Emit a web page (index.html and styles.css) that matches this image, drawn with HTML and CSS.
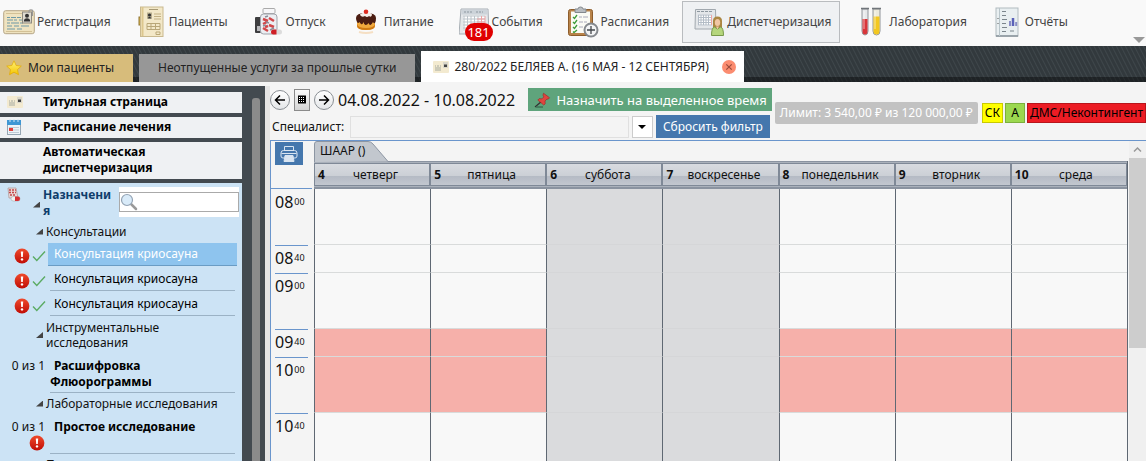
FILE: index.html
```html
<!DOCTYPE html>
<html lang="ru">

<head>
    <meta charset="UTF-8">
    <title>Диспетчеризация</title>
    <link rel="stylesheet" href="styles.css">
</head>

<body>

    <!-- Shared icons -->
    <svg class="sprite" aria-hidden="true">
        <defs>
            <linearGradient id="g-red" x1="0" y1="0" x2="0" y2="1">
                <stop offset="0" stop-color="#ef4a2c"/><stop offset="1" stop-color="#c00d05"/>
            </linearGradient>
            <linearGradient id="g-star" x1="0" y1="0" x2="0" y2="1">
                <stop offset="0" stop-color="#fff27a"/><stop offset="1" stop-color="#f4c400"/>
            </linearGradient>
        </defs>
        <symbol id="i-alert" viewBox="0 0 16 16">
            <circle cx="8" cy="8" r="7.4" fill="url(#g-red)"/>
            <path d="M6.8 3.4h2.4L8.8 9H7.2z" fill="#fff"/><circle cx="8" cy="11.4" r="1.2" fill="#fff"/>
        </symbol>
        <symbol id="i-check" viewBox="0 0 14 12">
            <path d="M1 6.5L4.8 10.5L13 1.5" fill="none" stroke="#5bab62" stroke-width="1.4"/>
        </symbol>
        <symbol id="i-card" viewBox="0 0 32 26">
            <rect x=".7" y="1.7" width="30.6" height="23" rx="2" fill="#efe3c0" stroke="#b5a687"/>
            <path d="M3 4.5h16M3 22.5h26" stroke="#d3c196"/>
            <path d="M4 8.5h3m1 0h5m1 0h4M4 11h6m1 0h3m2 0h3M4 14h3m1 0h8m1 0h3M4 17h5m2 0h5m2 0h8M4 20h8m2 0h5" stroke="#6f9aa6" stroke-width="1.2"/>
            <rect x="19.5" y="3" width="9" height="11" fill="#dedbd0" stroke="#8d8a80"/>
            <circle cx="24" cy="6.8" r="2" fill="#333"/><path d="M20.8 12.5q.2-3.2 3.2-3.2t3.2 3.2z" fill="#333"/>
            <path d="M26 4V2q0-1.3 1.8-1.3T29.500 2v5" fill="none" stroke="#999" stroke-width="1.1"/>
        </symbol>
        <symbol id="i-card-small" viewBox="0 0 16 12">
            <rect width="16" height="12" rx="1" fill="#f3ead0"/>
            <path d="M2 5h1m1 0h2m1 0h1M2 7h6M2 9h6" stroke="#a5aaa0"/>
            <rect x="10" y="1" width="5" height="6" fill="#d9d6ca"/><path d="M11 6V3.500h3V6z" fill="#444"/>
        </symbol>
    </svg>

    <!-- Main toolbar -->
    <nav class="toolbar">
        <button class="tool">
            <span class="tool-icon"><svg width="32" height="26"><use href="#i-card"/></svg></span>Регистрация
        </button>
        <button class="tool">
            <span class="tool-icon">
                <svg width="26" height="32" viewBox="0 0 26 32">
                    <rect x="1" y="11" width="4" height="8" fill="#d8b34a" stroke="#8f7430"/>
                    <rect x="2.500" y="1" width="22.500" height="29.500" fill="#f3e8c8" stroke="#c9b98f"/>
                    <path d="M4.500 1v29" stroke="#dcc78e" stroke-width="2"/>
                    <path d="M11 3.500h9" stroke="#a89a75"/>
                    <rect x="9" y="6.500" width="5" height="6" fill="#b8ad8e"/><circle cx="11.500" cy="9" r="1.600" fill="#333"/><path d="M9.500 12.500q2-3.500 4 0z" fill="#333"/>
                    <path d="M16 8h7M16 10.500h7M16 13h7" stroke="#c2b083"/>
                    <path d="M9 17.500h13v6H9zM9 20.500h13M13 17.500v6M17.500 17.500v6M18 26h4v2.500h-4z" fill="none" stroke="#b9a778"/>
                </svg>
            </span>Пациенты
        </button>
        <button class="tool">
            <span class="tool-icon">
                <svg width="28" height="30" viewBox="0 0 28 30">
                    <rect x="1" y="10" width="6" height="16" rx="1" fill="#3e3e40"/><path d="M3 19h4v5H3z" fill="#b9b9bc"/>
                    <rect x="9" y="1.500" width="12" height="5" rx="1" fill="#f6f6f8" stroke="#aaa"/>
                    <rect x="6.500" y="7" width="16.500" height="20" rx="3" fill="#eceef2" stroke="#9fa3ab"/>
                    <path d="M9 12l5 2M15 11l5 3M9 17l4-2M15 18l5 2M9 21l5 3M11 20l3-1" stroke="#d2474a" stroke-width="2.500"/>
                    <path d="M11 10l3-1M12 15l3 1M9 19l3-1M16 23l4-2" stroke="#8b8d98" stroke-width="1.500"/>
                    <rect x="17" y="22.500" width="11" height="5" rx="2.500" fill="#dcdcdc"/><path d="M17 25q0-2.500 2.500-2.500h3v5h-3q-2.500 0-2.500-2.500z" fill="#cf1f26"/>
                </svg>
            </span>Отпуск
        </button>
        <button class="tool">
            <span class="tool-icon">
                <svg width="22" height="26" viewBox="0 0 22 26">
                    <path d="M2 10v6q0 5 9 5t9-5v-6z" fill="#f0a93d"/><path d="M2 15q1 4 9 4t9-4v2q0 4-9 4t-9-4z" fill="#d07a12"/>
                    <path d="M1 9q0-5 10-5t10 5q0 4-1 5-1 1-2-1-1 2-2.500 3-1.500 0-2-2-1 2-3 2-1.500 0-2-3-1 3-2.500 2-1-1-1.500-2-1.500 2-2.500 0T1 9z" fill="#4b1d12"/>
                    <path d="M5 6q0-2 6-2.500t6 2.500q-1 3-3 1-2 2-4 0-3 2-5-1z" fill="#f5eee9"/>
                    <circle cx="11" cy="2.800" r="2.300" fill="#dd2b20"/>
                    <path d="M4 23q7 2 14 0" stroke="#f5dfc4" stroke-width="2" fill="none"/>
                </svg>
            </span>Питание
        </button>
        <button class="tool">
            <span class="tool-icon">
                <svg width="30" height="28" viewBox="0 0 30 28">
                    <path d="M2 1h27l1 25H0z" fill="#e4e7ea" stroke="#a7aeb4"/><path d="M2.500 1.500h26v5h-26z" fill="#ccd3d9"/>
                    <path d="M5 4h9m3 0h7" stroke="#8d979f" stroke-dasharray="2 1"/>
                    <path d="M4 7.500h22v16H4z" fill="#fff"/>
                    <path d="M4 8h22M4 11h22M4 14h22M4 17h22M4 20h22M5 8v15M8.500 8v15M12 8v15M15.500 8v15M19 8v15" stroke="#bcc4ca"/>
                    <path d="M22.500 8v15M26 8v15M18 11h8M18 14h8" stroke="#eda3a3"/>
                </svg>
                <span class="badge">181</span>
            </span>События
        </button>
        <button class="tool">
            <span class="tool-icon">
                <svg width="32" height="32" viewBox="0 0 32 32">
                    <rect x="1.500" y="3.500" width="24" height="26" rx="2" fill="#b8834a" stroke="#8d5d2c"/>
                    <path d="M4 5.500h19v21.500H4z" fill="#fbfbf5"/><path d="M8 3h3q0-2 2.500-2t2.500 2h3v3.500H8z" fill="#b9bdc1" stroke="#84898e"/>
                    <path d="M6 11l1.500 1.500L10 9M6 16l1.500 1.500L10 14M6 21l1.500 1.500L10 19M6 25.500l1 1L10 24" fill="none" stroke="#3f9d3a" stroke-width="1.300"/>
                    <path d="M12 11h3m1 0h5M12 16h4m1 0h3M12 21h4" stroke="#aab"/>
                    <circle cx="24" cy="24" r="6.500" fill="#f3f4f5" stroke="#85898e" stroke-width="2"/>
                    <path d="M24 20v8M20 24h8" stroke="#44484c" stroke-width="1.300"/>
                </svg>
            </span>Расписания
        </button>
        <button class="tool active">
            <span class="tool-icon">
                <svg width="30" height="30" viewBox="0 0 30 30">
                    <path d="M1.500 2.500h20L22 22H1z" fill="#e3e6e9" stroke="#a1a8ae"/><path d="M3 4.500h15" stroke="#8d979f" stroke-dasharray="3 1"/>
                    <path d="M4 7.500h14v11H4z" fill="#fff"/>
                    <path d="M4 8h14M4 10.500h14M4 13h14M4 15.500h14M4 18h14M4.500 8v10M7 8v10M9.500 8v10M12 8v10M14.500 8v10" stroke="#b3bcc6"/><path d="M17.500 8v10" stroke="#eda3a3"/>
                    <path d="M19 24V14q0-4.500 4.500-4.500T28 14v10z" fill="#ab8642"/>
                    <path d="M17.500 28.500q0-8 3-8.500l3 2 3-2q3 .5 3 8.500z" fill="#b5d67c" stroke="#78994a"/>
                    <ellipse cx="23.500" cy="15.500" rx="2.700" ry="3.500" fill="#f0c6a4"/><path d="M22 19.500h3l-1.500 3z" fill="#f0c6a4"/>
                </svg>
            </span>Диспетчеризация
        </button>
        <button class="tool">
            <span class="tool-icon">
                <svg width="22" height="30" viewBox="0 0 22 30">
                    <path d="M2 2v22q0 4 3 4t3-4V2z" fill="#e6e8ea" stroke="#8f9499"/><path d="M2.500 12h5v12q0 3.500-2.500 3.500T2.500 24z" fill="#d9363a"/>
                    <path d="M13 2v22q0 4 3.500 4t3.500-4V2z" fill="#eceadb" stroke="#8f9499"/><path d="M13.500 9.500h6V24q0 3.500-3 3.500t-3-3.500z" fill="#f3c820"/>
                    <path d="M1 1.500h8M12 1.500h9" stroke="#70757a" stroke-width="1.500"/><path d="M4 4v18M15 4v18" stroke="#fff" opacity=".6"/>
                </svg>
            </span>Лаборатория
        </button>
        <button class="tool">
            <span class="tool-icon">
                <svg width="24" height="30" viewBox="0 0 24 30">
                    <rect x="1" y="1" width="22" height="28" fill="#e9eff1" stroke="#b1bbc0"/><path d="M1 29h22" stroke="#87929a" stroke-width="1.500"/>
                    <path d="M4.500 1v28" stroke="#b9c5ca"/><path d="M3 11v1m0 4v1" stroke="#555"/>
                    <path d="M7 4.500h4M7 8.500h4M7 12.500h5M7 16.500h4M7 20.500h5M7 24.500h4M15 24h4" stroke="#7b858c"/>
                    <path d="M15 19v-5" stroke="#8a8ec5" stroke-width="2"/><path d="M18 19v-8" stroke="#5a61b8" stroke-width="2.500"/><path d="M21.200 19v-4" stroke="#8a8ec5" stroke-width="2"/>
                </svg>
            </span>Отчёты
        </button>
        <button class="toolbar-more" aria-label="Ещё"></button>
    </nav>

    <!-- Open tabs -->
    <div class="tabs">
        <button class="tab favorite">
            <svg width="16" height="16" viewBox="0 0 16 16"><path d="M8 .8l2.200 4.700 5.100.6-3.800 3.500 1 5.100L8 12.200l-4.500 2.500 1-5.100L.7 6.100l5.100-.6z" fill="url(#g-star)" stroke="#e3a900" stroke-width=".7"/></svg>
            Мои пациенты
        </button>
        <button class="tab">Неотпущенные услуги за прошлые сутки</button>
        <div class="tab current">
            <svg width="16" height="12"><use href="#i-card-small"/></svg>
            <span>280/2022 БЕЛЯЕВ А. (16 МАЯ - 12 СЕНТЯБРЯ)</span>
            <button class="tab-close" aria-label="Закрыть">
                <svg width="14" height="14" viewBox="0 0 14 14"><circle cx="7" cy="7" r="7" fill="#fb8c70"/><path d="M4.300 4.300l5.400 5.400M9.700 4.300L4.300 9.700" stroke="#9b4b3a" stroke-width="1.200"/></svg>
            </button>
        </div>
    </div>

    <div class="content">

        <!-- Patient menu -->
        <aside class="sidebar">
            <div class="menu">
                <a class="menu-item" href="#"><svg width="16" height="12"><use href="#i-card-small"/></svg>Титульная страница</a>
                <a class="menu-item" href="#">
                    <svg width="14" height="16" viewBox="0 0 14 16"><rect x=".5" y="2" width="13" height="13.500" fill="#eef4f8" stroke="#96a6b3"/><path d="M0 1h14v5H0z" fill="#3e97d4"/><path d="M3 0v3M7 0v3M11 0v3" stroke="#cfe6f5"/><path d="M2 8.500h10M2 11h10M2 13.500h10" stroke="#bfcbd5"/><rect x="2" y="9" width="4" height="3" fill="#e2403a"/></svg>
                    Расписание лечения
                </a>
                <a class="menu-item no-icon" href="#">Автоматическая диспетчеризация</a>

                <div class="orders">
                    <div class="orders-head">
                        <svg width="14" height="16" viewBox="0 0 14 16"><path d="M1 1h8l2 10H2z" fill="#ead9d9" stroke="#b09c9c" stroke-width=".8"/><path d="M2 3h2m1 0h2m1 0h1M2 5.500h2m1 0h2m1 0h1M3 8h2m1 0h2" stroke="#c4474a" stroke-width="1.500"/><rect x="4" y="9.500" width="9" height="4.500" rx="2.200" fill="#f2f2f2" stroke="#aaa" stroke-width=".6"/><path d="M8 9.500h3q2 0 2 2.200T11 14H8z" fill="#d53135"/></svg>
                        <i class="caret"></i>
                        <span class="orders-title">Назначения</span>
                        <div class="search">
                            <svg width="18" height="18" viewBox="0 0 18 18"><path d="M11 11l5 5" stroke="#9a9a9a" stroke-width="2.500" stroke-linecap="round"/><circle cx="7" cy="7" r="5.500" fill="#d9ebf9" stroke="#93a3b4" stroke-width="1.200"/></svg>
                            <input type="text" aria-label="Поиск назначений">
                        </div>
                    </div>

                    <div class="group"><i class="caret"></i><span>Консультации</span></div>
                    <div class="order selected">
                        <span class="status"><svg width="16" height="16"><use href="#i-alert"/></svg><svg width="14" height="12"><use href="#i-check"/></svg></span>
                        <a class="order-name" href="#">Консультация криосауна</a>
                    </div>
                    <div class="order">
                        <span class="status"><svg width="16" height="16"><use href="#i-alert"/></svg><svg width="14" height="12"><use href="#i-check"/></svg></span>
                        <a class="order-name" href="#">Консультация криосауна</a>
                    </div>
                    <div class="order">
                        <span class="status"><svg width="16" height="16"><use href="#i-alert"/></svg><svg width="14" height="12"><use href="#i-check"/></svg></span>
                        <a class="order-name" href="#">Консультация криосауна</a>
                    </div>

                    <div class="group"><i class="caret"></i><span>Инструментальные исследования</span></div>
                    <div class="order course">
                        <span class="status">0 из 1</span>
                        <a class="order-name" href="#">Расшифровка Флюорограммы</a>
                    </div>

                    <div class="group"><i class="caret"></i><span>Лабораторные исследования</span></div>
                    <div class="order course">
                        <span class="status">0 из 1 <svg width="16" height="16"><use href="#i-alert"/></svg></span>
                        <a class="order-name" href="#">Простое исследование</a>
                    </div>
                    <div class="group"><i class="caret"></i><span>Процедуры</span></div>
                </div>
            </div>
            <div class="menu-scroll"></div>
        </aside>

        <main class="main">
            <!-- Period and filter -->
            <header class="filter">
                <div class="filter-left">
                    <div class="filter-row">
                        <button class="round" aria-label="Назад"><svg width="12" height="12" viewBox="0 0 12 12"><path d="M11 6H2M6 1.500L1.500 6 6 10.500" fill="none" stroke="#000" stroke-width="1.500"/></svg></button>
                        <button class="pick" aria-label="Календарь"><svg width="8" height="9" viewBox="0 0 8 9"><path d="M0 .5h8v8H0z"/><path d="M1 2.500h6M1 4.500h6M1 6.500h6" stroke="#fff" stroke-dasharray="1 1"/></svg></button>
                        <button class="round" aria-label="Вперёд"><svg width="12" height="12" viewBox="0 0 12 12"><path d="M1 6h9M6 1.500L10.500 6 6 10.500" fill="none" stroke="#000" stroke-width="1.500"/></svg></button>
                        <span class="period">04.08.2022 - 10.08.2022</span>
                        <button class="assign">
                            <svg width="18" height="16" viewBox="0 0 18 16"><path d="M1 15l7-6" stroke="#333" stroke-width="1.200"/><path d="M9.500 1.200l6 4.500-1.300 1.500-1.200-.2-2 2 .2 2.800-1.400 1.300-6-5 1.500-1.500 2.500.3 2-2-.8-1.700z" fill="#e0453f" stroke="#9e2020" stroke-width=".6"/><path d="M2 15h7" stroke="#3c7254" stroke-width="1.500"/></svg>
                            Назначить на выделенное время
                        </button>
                    </div>
                    <div class="filter-row second">
                        <label for="doctor">Специалист:</label>
                        <input id="doctor" class="doctor" type="text">
                        <button class="drop" aria-label="Список специалистов"></button>
                        <button class="reset">Сбросить фильтр</button>
                    </div>
                </div>
                <div class="marks">
                    <span class="limit">Лимит: 3 540,00 ₽ из 120 000,00 ₽</span>
                    <span class="mark yellow">СК</span>
                    <span class="mark green">А</span>
                    <span class="mark red">ДМС/Неконтингент</span>
                </div>
            </header>

            <!-- Week schedule -->
            <section class="schedule">
                <div class="times">
                    <div class="print-cell">
                        <button class="print" aria-label="Печать">
                            <svg width="18" height="18" viewBox="0 0 18 18" fill="none" stroke="#d8e4f1"><path d="M4.500 5V1.500h9V5M4 13H3q-2 0-2-2V8q0-2.500 2.500-2.500h11Q17 5.500 17 8v3q0 2-2 2h-1M1.500 8.500h15"/><path d="M5 10.500h8l1 6H4z" fill="#d8e4f1"/></svg>
                        </button>
                    </div>
                    <div class="time long">08<small>00</small></div>
                    <div class="time">08<small>40</small></div>
                    <div class="time long">09<small>00</small></div>
                    <div class="time">09<small>40</small></div>
                    <div class="time long">10<small>00</small></div>
                    <div class="time">10<small>40</small></div>
                </div>
                <div class="calendar">
                    <div class="room">
                        <svg width="76" height="21" viewBox="0 0 76 21"><path d="M.5 21V3Q.5.500 3 .500H54Q57 .500 59 3L74 20.500" fill="#c2c7ce" stroke="#8d96a3"/></svg>
                        <span>ШААР ()</span>
                    </div>
                    <table class="week">
                        <thead>
                            <tr>
                                <th><div class="day"><b>4</b><span>четверг</span></div></th>
                                <th><div class="day"><b>5</b><span>пятница</span></div></th>
                                <th><div class="day"><b>6</b><span>суббота</span></div></th>
                                <th><div class="day"><b>7</b><span>воскресенье</span></div></th>
                                <th><div class="day"><b>8</b><span>понедельник</span></div></th>
                                <th><div class="day"><b>9</b><span>вторник</span></div></th>
                                <th><div class="day"><b>10</b><span>среда</span></div></th>
                            </tr>
                        </thead>
                        <tbody>
                            <tr class="long"><td></td><td></td><td class="off"></td><td class="off"></td><td></td><td></td><td></td></tr>
                            <tr><td></td><td></td><td class="off"></td><td class="off"></td><td></td><td></td><td></td></tr>
                            <tr class="long"><td></td><td></td><td class="off"></td><td class="off"></td><td></td><td></td><td></td></tr>
                            <tr class="busy"><td></td><td></td><td class="off"></td><td class="off"></td><td></td><td></td><td></td></tr>
                            <tr class="long busy"><td></td><td></td><td class="off"></td><td class="off"></td><td></td><td></td><td></td></tr>
                            <tr class="long"><td></td><td></td><td class="off"></td><td class="off"></td><td></td><td></td><td></td></tr>
                        </tbody>
                    </table>
                </div>
                <div class="scrollbar">
                    <svg width="17" height="17" viewBox="0 0 17 17"><path d="M5 10.500l3.500-3.500 3.500 3.500" fill="none" stroke="#999" stroke-width="1.500"/></svg>
                    <div class="scroll-thumb"></div>
                </div>
            </section>
        </main>
    </div>

</body>

</html>
```
FILE: styles.css
```css
* {
    box-sizing: border-box;
}

body {
    margin: 0;
    height: 100vh;
    display: flex;
    flex-direction: column;
    overflow: hidden;
    font-family: "Noto Sans", "Open Sans", sans-serif;
    font-size: 12px;
    line-height: 16px;
    color: #111;
    background: #f4f4f4;
}

button {
    font: inherit;
    color: inherit;
    padding: 0;
    border: none;
    background: none;
    cursor: pointer;
}

a {
    color: inherit;
    text-decoration: none;
}

svg {
    display: block;
    flex: none;
}

.sprite {
    position: absolute;
    width: 0;
    height: 0;
}

/* Toolbar */
.toolbar {
    position: relative;
    display: flex;
    gap: 4px;
    height: 46px;
    flex: none;
    padding: 1px 0 3px;
    background: #f9f9f9;
    white-space: nowrap;
}

.tool {
    display: flex;
    align-items: center;
    padding: 0 8px 0 10px;
    border: 1px solid transparent;
    color: #444;
}

.tool:first-child {
    padding-left: 2px;
}

.tool.active {
    background: #eff1f3;
    border-color: #b9bcbf;
}

.tool-icon {
    position: relative;
    width: 32px;
    display: flex;
    justify-content: center;
    margin-right: 2px;
}

.badge {
    position: absolute;
    left: 7px;
    top: 15px;
    width: 28px;
    height: 18px;
    border-radius: 9px;
    background: #e00000;
    color: #fff;
    font-size: 13px;
    line-height: 18px;
}

.toolbar-more {
    position: absolute;
    right: 1px;
    bottom: 3px;
    border: 6px solid transparent;
    border-top-color: #999;
    border-bottom: none;
}

/* Tabs */
.tabs {
    display: flex;
    align-items: flex-end;
    gap: 6px;
    height: 36px;
    flex: none;
    background:
        linear-gradient(transparent 31px, rgba(0, 0, 0, .4) 31px),
        repeating-linear-gradient(63deg, #32393d 0, #32393d 2px, #3f474b 3px, #32393d 4px);
    white-space: nowrap;
}

.tab {
    display: flex;
    align-items: center;
    height: 28px;
    padding: 0 19px;
    background: #979797;
    color: #222;
}

.tab.favorite {
    gap: 6px;
    padding: 0 19px 0 6px;
    background: #d7bc7b;
}

.tab.current {
    height: 31px;
    gap: 5px;
    padding: 0 8px 0 12px;
    background: #fff;
}

.tab-close {
    margin-left: 8px;
}

/* Page body */
.content {
    display: flex;
    flex: 1;
    min-height: 0;
    padding-top: 4px;
}

.sidebar {
    display: flex;
    gap: 10px;
    width: 265px;
    flex: none;
    padding: 6px 5px 0 0;
    background: #434a50;
    overflow: hidden;
}

.menu {
    display: flex;
    flex-direction: column;
    gap: 4px;
    width: 242px;
}

.menu-item {
    display: grid;
    grid-template-columns: 43px 1fr;
    align-items: center;
    padding: 2px 60px 3px 0;
    background: #eff1f3;
    color: #000;
    font-weight: bold;
}

.menu-item.no-icon {
    display: block;
    padding-left: 43px;
}

.menu-item svg {
    margin-left: 7px;
}

.menu-scroll {
    width: 8px;
    margin-top: 6px;
    background: #8b8b8b;
    border-radius: 3px 3px 0 0;
}

.orders {
    flex: none;
    background: #cce3f5;
}

.orders-head {
    display: grid;
    grid-template-columns: 33px 10px 76px 120px;
    min-height: 39px;
    padding-top: 4px;
}

.orders-head > svg {
    margin-left: 7px;
}

.orders-title {
    color: #0f3d6b;
    font-weight: bold;
    width: 70px;
    word-break: break-all;
}

.caret {
    align-self: center;
    width: 7px;
    height: 6px;
    background: #444;
    clip-path: polygon(100% 0, 100% 100%, 0 100%);
}

.search {
    position: relative;
    height: 30px;
    padding: 5px 0;
    background: #fff;
}

.search svg {
    position: absolute;
    left: 1px;
    top: 6px;
}

.search input {
    display: block;
    width: 100%;
    height: 20px;
    padding: 0 4px 0 20px;
    border: 1px solid #aaa;
    background: transparent;
    font: inherit;
}

.group {
    display: grid;
    grid-template-columns: 10px 1fr;
    padding: 2px 10px 2px 36px;
    line-height: 15px;
}

.orders-head + .group {
    padding-bottom: 4px;
}

.order {
    display: grid;
    grid-template-columns: 48px 1fr;
    padding-right: 5px;
    min-height: 25px;
}

.status {
    display: flex;
    align-items: center;
    gap: 2px;
    padding-left: 14px;
}

.order-name {
    height: 23px;
    margin: 0 2px;
    padding: 3px 0 3px 4px;
    border-bottom: 1px solid #9bb2c5;
    color: #000;
}

.order.selected .order-name {
    margin: 0;
    padding-left: 6px;
    background: #8ec4ee;
    border-color: #6a9cc4;
    color: #fff;
}

.order.course {
    padding-top: 3px;
    padding-bottom: 1px;
}

.course .status {
    display: block;
    padding: 3px 3px 0 0;
    text-align: right;
    white-space: nowrap;
}

.course .status svg {
    margin-left: auto;
}

.course .order-name {
    height: auto;
    min-height: 38px;
    padding: 3px 20px 2px 0;
    text-indent: 4px;
    font-weight: bold;
}

/* Filter */
.main {
    display: flex;
    flex-direction: column;
    flex: 1;
    min-width: 0;
    border-left: 5px solid #e5e5e5;
}

.filter {
    display: flex;
    height: 54px;
    flex: none;
    white-space: nowrap;
}

.filter-left {
    flex: 1;
    padding-top: 2px;
}

.filter-row {
    display: flex;
    align-items: center;
    gap: 4px;
    height: 23px;
}

.filter-row.second {
    gap: 3px;
    margin-top: 4px;
    padding: 0 2px;
}

.round {
    display: flex;
    align-items: center;
    justify-content: center;
    width: 20px;
    height: 20px;
    border: 1px solid #8a8f94;
    border-radius: 50%;
    background: linear-gradient(#fff, #e4e6e8);
}

.pick {
    display: flex;
    align-items: center;
    justify-content: center;
    width: 16px;
    height: 22px;
    border: 1px solid #8a8a8a;
    background: linear-gradient(#fafafa, #d4d4d4);
}

.period {
    font-size: 16px;
    flex: 1;
}

.assign {
    display: flex;
    align-items: center;
    gap: 4px;
    height: 23px;
    padding: 0 5px 0 6px;
    background: #5fa47c;
    color: #fff;
    font-size: 13px;
}

.doctor {
    flex: 1;
    min-width: 0;
    height: 22px;
    margin-left: 3px;
    border: 1px solid #e0e0e0;
    background: #f4f4f4;
    font: inherit;
}

.drop {
    display: flex;
    align-items: center;
    justify-content: center;
    width: 21px;
    height: 22px;
    border: 1px solid #ccc;
    background: #fff;
}

.drop::after {
    content: "";
    border: 4px solid transparent;
    border-top-color: #000;
    border-bottom: none;
}

.reset {
    height: 23px;
    padding: 0 7px;
    background: #4577ad;
    color: #fff;
}

.marks {
    display: flex;
    align-items: center;
    gap: 2px;
    padding-left: 3px;
}

.limit {
    padding: 3px 5px;
    margin-right: 2px;
    border-radius: 2px;
    background: #c2c2c2;
    color: #fff;
}

.mark {
    padding: 1px 2px;
    min-width: 20px;
    text-align: center;
    border: 1px solid;
    line-height: 16px;
    color: #000;
}

.mark.yellow {
    background: #ff0;
    border-color: #c9c900;
}

.mark.green {
    background: #9bd84f;
    border-color: #7cb03c;
}

.mark.red {
    background: #ec1c24;
    border-color: #b8151b;
}

/* Schedule */
.schedule {
    display: flex;
    flex: 1;
    min-height: 0;
    border-top: 1px solid #6a95cc;
    border-left: 1px solid #6a95cc;
}

.times {
    width: 43px;
    flex: none;
}

.print-cell {
    height: 48px;
    margin-right: 2px;
    padding: 1px 4px;
    border-bottom: 1px solid #6a95cc;
}

.print {
    display: flex;
    align-items: center;
    justify-content: center;
    width: 28px;
    height: 23px;
    background: #4577ad;
}

.time {
    display: flex;
    align-items: flex-start;
    gap: 1px;
    height: 28px;
    margin: 0 6px 0 4px;
    padding-top: 3px;
    border-top: 1px solid #6a95cc;
    font-size: 16px;
    line-height: 18px;
}

.print-cell + .time {
    border-top-color: transparent;
}

.time.long {
    height: 56px;
}

.time small {
    font-size: 9px;
}

.calendar {
    flex: 1;
    min-width: 0;
    overflow: hidden;
}

.room {
    position: relative;
    height: 20px;
    padding: 2px 6px;
}

.room svg {
    position: absolute;
    left: 0;
    top: 0;
}

.room span {
    position: relative;
}

.week {
    width: 100%;
    table-layout: fixed;
    border-collapse: separate;
    border-spacing: 0;
    border-right: 1px solid #5f6873;
}

.week th {
    height: 28px;
    padding: 1px 0;
    border-top: 1px solid #8a93a0;
    border-bottom: 2px solid #8a93a0;
    background: #aab1bb;
    font-weight: normal;
}

.day {
    display: flex;
    height: 23px;
    align-items: center;
    padding: 0 3px;
    border: 1px solid #7f8997;
    background: linear-gradient(#d8dbe0, #ccd0d6 55%, #b4bac4 56%, #c2c7cf);
}

.day span {
    flex: 1;
    text-align: center;
}

.week td {
    height: 28px;
    padding: 0;
    border-left: 1px solid #5f6873;
    border-bottom: 1px solid #d9dbdb;
    background: #f8f8f8;
}

.week .long td {
    height: 56px;
}

.week .busy td {
    background: #f6b0aa;
}

.week td.off {
    background: #dadbdd;
    border-bottom-color: #d5d6d8;
}

.scrollbar {
    width: 17px;
    flex: none;
    margin-left: 1px;
    background: #f0f0f0;
}

.scroll-thumb {
    height: 190px;
    background: #cdcdcd;
}
```
